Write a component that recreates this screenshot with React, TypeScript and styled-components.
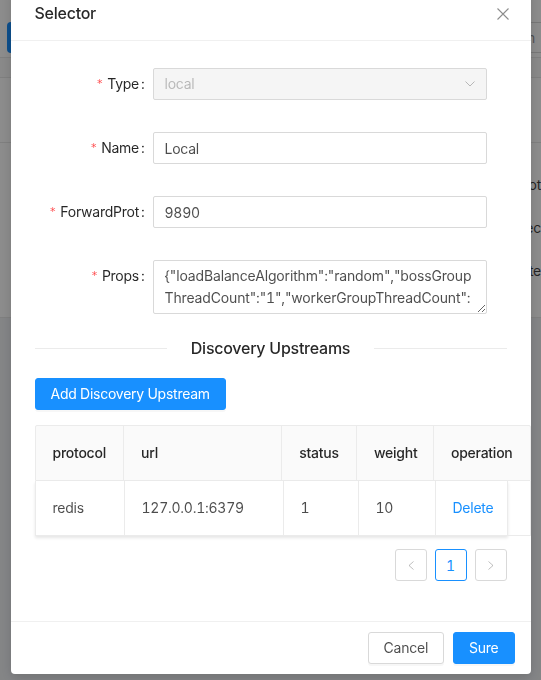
import React from "react";
import styled, { createGlobalStyle } from "styled-components";

const propsValue =
  '{"loadBalanceAlgorithm":"random","bossGroupThreadCount":"1","workerGroupThreadCount":"12","clientMaxIdleTimeMs":"30000","clientPendingAcquireMaxCount":"5"}';

const columns = [
  { title: "protocol", width: 89 },
  { title: "url", width: 159 },
  { title: "status", width: 75 },
  { title: "weight", width: 77 },
  { title: "operation", width: 96 },
];

const rows = [{ protocol: "redis", url: "127.0.0.1:6379", status: "1", weight: "10" }];

const GlobalStyle = createGlobalStyle`
  html, body {
    margin: 0;
    padding: 0;
  }
  body {
    font-family: Inter, "Noto Sans", sans-serif;
    font-size: 14px;
    letter-spacing: -0.25px;
    font-variant-numeric: tabular-nums;
    color: rgba(0, 0, 0, 0.65);
    background: #f0f2f5;
    overflow: hidden;
  }
  * {
    box-sizing: border-box;
  }
  input, textarea, button {
    letter-spacing: inherit;
    font-variant-numeric: inherit;
  }
`;

/* page behind the modal */
const Backdrop = styled.div`
  height: 680px;
  background: #f0f2f5;
  overflow: hidden;
`;
const BackCard = styled.div`
  background: #fff;
`;
const BackToolbar = styled.div`
  display: flex;
  justify-content: space-between;
  align-items: flex-start;
  height: 58px;
  padding: 22px 0 0 7px;
  border-bottom: 1px solid #e8e8e8;
`;
const BackButton = styled.div`
  width: 90px;
  height: 31px;
  border-radius: 4px;
  background: #1890ff;
`;
const BackInput = styled.div`
  width: 180px;
  height: 31px;
  margin-right: -10px;
  padding: 0 15px;
  border: 1px solid #d9d9d9;
  border-radius: 4px;
  line-height: 29px;
  text-align: right;
  color: rgba(0, 0, 0, 0.45);
`;
const BackHead = styled.div`
  height: 20px;
  background: #fafafa;
  border-bottom: 1px solid #e8e8e8;
`;
const BackRow = styled.div<{ $h: number }>`
  height: ${(p) => p.$h}px;
  border-bottom: 1px solid #e8e8e8;
  display: flex;
  flex-direction: column;
  align-items: flex-end;
  gap: 21px;
  padding: 31px 0 0 0;
  line-height: 22px;
  color: rgba(0, 0, 0, 0.75);
`;

/* modal */
const Mask = styled.div`
  position: fixed;
  inset: 0;
  background: rgba(0, 0, 0, 0.45);
`;
const ModalWrap = styled.div`
  position: fixed;
  inset: 0;
  display: flex;
  justify-content: center;
  align-items: flex-start;
`;
const Modal = styled.div`
  width: 520px;
  margin-top: -14px;
  background: #fff;
  border-radius: 4px;
  box-shadow: 0 4px 12px rgba(0, 0, 0, 0.15);
`;
const ModalHeader = styled.div`
  position: relative;
  padding: 16px 24px;
  border-bottom: 1px solid #f0f0f0;
`;
const ModalTitle = styled.div`
  font-size: 16px;
  line-height: 22px;
  font-weight: 500;
  color: rgba(0, 0, 0, 0.85);
`;
const CloseButton = styled.button`
  position: absolute;
  top: 0;
  right: 0;
  width: 56px;
  height: 56px;
  padding: 0;
  border: 0;
  background: transparent;
  display: flex;
  align-items: center;
  justify-content: center;
  color: rgba(0, 0, 0, 0.45);
  cursor: pointer;
`;
const ModalBody = styled.div`
  padding: 27px 24px 24px;
`;
const ModalFooter = styled.div`
  display: flex;
  justify-content: flex-end;
  gap: 9px;
  padding: 10px 16px;
  border-top: 1px solid #f0f0f0;
`;

/* form */
const Form = styled.div`
  display: flex;
  flex-direction: column;
  gap: 32px;
`;
const FormItem = styled.div`
  display: flex;
  align-items: flex-start;
`;
const Label = styled.label<{ $required?: boolean }>`
  flex: none;
  width: 118px;
  padding-right: 8px;
  text-align: right;
  line-height: 32px;
  color: rgba(0, 0, 0, 0.85);
  white-space: nowrap;
  &::before {
    content: ${(p) => (p.$required ? '"*"' : "none")};
    display: inline-block;
    margin-right: 5px;
    color: #ff4d4f;
    font-family: "DejaVu Sans", sans-serif;
    font-size: 11px;
    vertical-align: 2px;
  }
  &::after {
    content: ":";
    margin-left: 2px;
  }
`;
const Control = styled.div`
  width: 334px;
`;
const Input = styled.input`
  display: block;
  width: 100%;
  height: 32px;
  padding: 4px 11px;
  border: 1px solid #d9d9d9;
  border-radius: 2px;
  font: inherit;
  line-height: 22px;
  color: rgba(0, 0, 0, 0.7);
  outline: none;
`;
const Select = styled.div<{ $disabled?: boolean }>`
  display: flex;
  align-items: center;
  justify-content: space-between;
  height: 32px;
  padding: 0 11px;
  border: 1px solid #d9d9d9;
  border-radius: 2px;
  background: ${(p) => (p.$disabled ? "#f5f5f5" : "#fff")};
  color: ${(p) => (p.$disabled ? "rgba(0, 0, 0, 0.25)" : "rgba(0, 0, 0, 0.7)")};
  line-height: 22px;
`;
const TextArea = styled.textarea`
  display: block;
  width: 100%;
  height: 54px;
  padding: 4px 11px;
  border: 1px solid #d9d9d9;
  border-radius: 2px;
  font: inherit;
  letter-spacing: -0.15px;
  line-height: 22px;
  color: rgba(0, 0, 0, 0.7);
  overflow: hidden;
  resize: vertical;
  outline: none;
`;

/* divider */
const Divider = styled.div`
  display: flex;
  align-items: center;
  margin: 23px 0 19px;
  &::before,
  &::after {
    content: "";
    flex: 1;
    border-top: 1px solid #ebebeb;
  }
`;
const DividerText = styled.span`
  padding: 0 24px;
  font-size: 16px;
  line-height: 22px;
  font-weight: 500;
  color: rgba(0, 0, 0, 0.85);
`;

/* buttons */
const Button = styled.button<{ $primary?: boolean }>`
  height: 32px;
  padding: 4px 15px;
  border: 1px solid ${(p) => (p.$primary ? "#1890ff" : "#d9d9d9")};
  border-radius: 3px;
  background: ${(p) => (p.$primary ? "#1890ff" : "#fff")};
  color: ${(p) => (p.$primary ? "#fff" : "rgba(0, 0, 0, 0.7)")};
  font: inherit;
  line-height: 22px;
  box-shadow: 0 2px 0 rgba(0, 0, 0, 0.03);
  cursor: pointer;
`;

/* table */
const Table = styled.div`
  width: 496px;
  margin-top: 15px;
`;
const HeadRow = styled.div`
  display: flex;
  border: 1px solid #ebebeb;
  border-radius: 2px 2px 0 0;
  background: #fafafa;
`;
const HeadCell = styled.div`
  padding: 16px 16px 16px 17px;
  line-height: 22px;
  font-weight: 500;
  color: rgba(0, 0, 0, 0.85);
  border-right: 1px solid #ebebeb;
  white-space: nowrap;
  &:last-child {
    border-right: 0;
  }
`;
const BodyRow = styled.div`
  display: flex;
`;
const BodyCells = styled.div`
  display: flex;
  border-left: 1px solid #ebebeb;
  box-shadow: 0 2px 3px rgba(0, 0, 0, 0.1);
`;
const BodyCell = styled.div`
  padding: 16px 16px 16px 17px;
  line-height: 22px;
  border-right: 1px solid #ebebeb;
  border-bottom: 1px solid #ebebeb;
  color: rgba(0, 0, 0, 0.7);
  white-space: nowrap;
`;
const FillerCell = styled.div`
  flex: 1;
  border-right: 1px solid #ebebeb;
  border-bottom: 1px solid #ebebeb;
`;
const LinkText = styled.a`
  color: #1890ff;
  cursor: pointer;
`;

/* pagination */
const Pagination = styled.div`
  display: flex;
  justify-content: flex-end;
  gap: 8px;
  margin: 13px 0 16px;
`;
const PageItem = styled.div<{ $active?: boolean }>`
  width: 32px;
  height: 32px;
  display: flex;
  align-items: center;
  justify-content: center;
  border: 1px solid ${(p) => (p.$active ? "#1890ff" : "#d9d9d9")};
  border-radius: 3px;
  color: ${(p) => (p.$active ? "#1890ff" : "rgba(0, 0, 0, 0.25)")};
  background: #fff;
`;

const CloseIcon = () => (
  <svg width="12" height="12" viewBox="0 0 12 12" fill="none" stroke="currentColor" strokeWidth="1.1">
    <path d="M0.5 0.5L11.5 11.5M11.5 0.5L0.5 11.5" />
  </svg>
);
const DownIcon = () => (
  <svg width="10" height="6" viewBox="0 0 10 6" fill="none" stroke="currentColor" strokeWidth="1">
    <path d="M0.5 0.5L5 5L9.5 0.5" />
  </svg>
);
const LeftIcon = () => (
  <svg width="6" height="9" viewBox="0 0 6 9" fill="none" stroke="currentColor" strokeWidth="1">
    <path d="M5.5 0.5L1 4.5L5.5 8.5" />
  </svg>
);
const RightIcon = () => (
  <svg width="6" height="9" viewBox="0 0 6 9" fill="none" stroke="currentColor" strokeWidth="1">
    <path d="M0.5 0.5L5 4.5L0.5 8.5" />
  </svg>
);

const App: React.FC = () => {
  const widths = [89, 159, 75, 77, 72];
  return (
    <>
      <GlobalStyle />
      <Backdrop>
        <BackCard>
          <BackToolbar>
            <BackButton />
            <BackInput>Please input platform</BackInput>
          </BackToolbar>
          <BackHead />
          <BackRow $h={65} />
          <BackRow $h={175}>
            <span>Root</span>
            <span>Spec</span>
            <span>Byte</span>
          </BackRow>
        </BackCard>
      </Backdrop>
      <Mask />
      <ModalWrap>
        <Modal>
          <ModalHeader>
            <ModalTitle>Selector</ModalTitle>
            <CloseButton aria-label="Close">
              <CloseIcon />
            </CloseButton>
          </ModalHeader>
          <ModalBody>
            <Form>
              <FormItem>
                <Label $required>Type</Label>
                <Control>
                  <Select $disabled>
                    <span>local</span>
                    <DownIcon />
                  </Select>
                </Control>
              </FormItem>
              <FormItem>
                <Label $required>Name</Label>
                <Control>
                  <Input defaultValue="Local" />
                </Control>
              </FormItem>
              <FormItem>
                <Label $required>ForwardProt</Label>
                <Control>
                  <Input defaultValue="9890" />
                </Control>
              </FormItem>
              <FormItem>
                <Label $required>Props</Label>
                <Control>
                  <TextArea rows={2} defaultValue={propsValue} />
                </Control>
              </FormItem>
            </Form>

            <Divider>
              <DividerText>Discovery Upstreams</DividerText>
            </Divider>

            <Button $primary>Add Discovery Upstream</Button>

            <Table>
              <HeadRow>
                {columns.map((c) => (
                  <HeadCell key={c.title} style={{ width: c.width }}>
                    {c.title}
                  </HeadCell>
                ))}
              </HeadRow>
              {rows.map((r) => (
                <BodyRow key={r.url}>
                  <BodyCells>
                    <BodyCell style={{ width: widths[0] }}>{r.protocol}</BodyCell>
                    <BodyCell style={{ width: widths[1] }}>{r.url}</BodyCell>
                    <BodyCell style={{ width: widths[2] }}>{r.status}</BodyCell>
                    <BodyCell style={{ width: widths[3] }}>{r.weight}</BodyCell>
                    <BodyCell style={{ width: widths[4] }}>
                      <LinkText>Delete</LinkText>
                    </BodyCell>
                  </BodyCells>
                  <FillerCell />
                </BodyRow>
              ))}
            </Table>

            <Pagination>
              <PageItem>
                <LeftIcon />
              </PageItem>
              <PageItem $active>1</PageItem>
              <PageItem>
                <RightIcon />
              </PageItem>
            </Pagination>
          </ModalBody>
          <ModalFooter>
            <Button>Cancel</Button>
            <Button $primary>Sure</Button>
          </ModalFooter>
        </Modal>
      </ModalWrap>
    </>
  );
};

export default App;
